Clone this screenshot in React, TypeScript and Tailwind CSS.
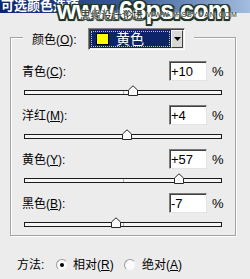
import React from "react";

const font = "font-['Liberation_Sans','Noto_Sans_CJK_SC',sans-serif]";

function Label({ zh, k }: { zh: string; k: string }) {
  return (
    <span className="text-[12px] leading-[14px] text-black">
      {zh}(<span className="underline underline-offset-1">{k}</span>):
    </span>
  );
}

function Row({ zh, k, value, v }: { zh: string; k: string; value: string; v: number }) {
  const left = 50 + v / 2;
  return (
    <div className="flex flex-col">
      <div className="flex h-[20px] items-center pl-[11px]">
        <div className="w-[147px]">
          <Label zh={zh} k={k} />
        </div>
        <div className="flex h-[20px] w-[38px] items-center border border-[#7b7b7b] border-b-[#e4e4e4] border-r-[#e4e4e4] bg-white pl-[1px] text-[13px] leading-none text-black shadow-[inset_1px_1px_0_#404040]">
          {value}
        </div>
        <span className="ml-[5px] text-[13px] leading-none text-black">%</span>
      </div>
      <div className="relative ml-[13px] mt-[9px] h-[5px] w-[198px] border border-[#1c1c1c] bg-[#f6f6f6]">
        <div className="absolute left-1/2 top-0 h-full w-px bg-[#b0b0b0]" />
        <svg
          className="absolute -top-[6px] -ml-[5px]"
          style={{ left: `${left}%` }}
          width="10"
          height="11"
          viewBox="0 0 10 11"
        >
          <path d="M0.5 10.5 L0.5 5 L5 0.8 L9.5 5 L9.5 10.5 Z" fill="#fafafa" stroke="#2a2a2a" strokeWidth="1" />
        </svg>
      </div>
    </div>
  );
}

function Radio({ on }: { on: boolean }) {
  return (
    <div className="flex h-[12px] w-[12px] items-center justify-center rounded-full border border-[#9a9a9a] border-b-[#ececec] border-r-[#ececec] bg-[#fbfbfb]">
      {on && <div className="h-[4px] w-[4px] rounded-full bg-black" />}
    </div>
  );
}

export default function App() {
  return (
    <div className={`relative h-[279px] w-[250px] overflow-hidden bg-[#ececec] ${font}`}>
      {/* title bar */}
      <div className="flex h-[13px] items-start bg-gradient-to-r from-[#0b256b] via-[#3a5a96] to-[#a3bde0] pl-[1px]">
        <span className="-mt-[2px] text-[13px] font-bold leading-[15px] text-white">可选颜色选项</span>
      </div>

      {/* group */}
      <div className="ml-[10px] mt-[24px] w-[226px] border border-[#a3a3a3] pb-[8px] shadow-[1px_1px_0_#fff,inset_1px_1px_0_#fff]">
        <div className="-mt-[11px] ml-[12px] flex w-fit items-center bg-[#ececec] px-[9px]">
          <div className="w-[56px]">
            <Label zh="颜色" k="O" />
          </div>
          <div className="flex h-[22px] w-[97px] items-stretch border border-[#808080] border-b-white border-r-white p-[1px] shadow-[inset_1px_1px_0_#404040]">
            <div className="flex flex-1 items-center bg-[#0e246a] outline-1 -outline-offset-2 outline-dotted outline-[#c8c8a0]">
              <div className="ml-[6px] h-[12px] w-[13px] border border-black bg-[#ffff00]" />
              <span className="ml-[7px] text-[14px] leading-none text-white">黄色</span>
            </div>
            <div className="flex w-[12px] items-center justify-center border border-[#f8f8f8] border-b-[#404040] border-r-[#404040] bg-[#d8d8d8]">
              <svg width="7" height="4" viewBox="0 0 7 4">
                <path d="M0 0 H7 L3.5 4 Z" fill="#000" />
              </svg>
            </div>
          </div>
        </div>
        <div className="mt-[10px] flex flex-col gap-[10px]">
          <Row zh="青色" k="C" value="+10" v={10} />
          <Row zh="洋红" k="M" value="+4" v={4} />
          <Row zh="黄色" k="Y" value="+57" v={57} />
          <Row zh="黑色" k="B" value="-7" v={-7} />
        </div>
      </div>

      {/* method */}
      <div className="ml-[17px] mt-[22px] flex h-[14px] items-center text-[12px] leading-[14px] text-black">
        <span className="w-[39px]">方法:</span>
        <Radio on={true} />
        <span className="ml-[5px] w-[51px]">
          相对(<span className="underline underline-offset-1">R</span>)
        </span>
        <Radio on={false} />
        <span className="ml-[6px]">
          绝对(<span className="underline underline-offset-1">A</span>)
        </span>
      </div>

      {/* watermark overlay */}
      <div className="pointer-events-none absolute left-[57px] -top-[2px] text-[25px] font-bold leading-[25px] tracking-[-0.6px] text-white [text-shadow:1.5px_1.5px_0_#22362a,-1.5px_-1.5px_0_#22362a,1.5px_-1.5px_0_#22362a,-1.5px_1.5px_0_#22362a,0_2px_1px_#22362a,2px_0_1px_#22362a]">
        www.68ps.com
      </div>
      <div className="pointer-events-none absolute left-[80px] top-[9px] flex items-center">
        <span className="text-[10.5px] leading-[12px] text-[#1d2a22] [text-shadow:0_0_2px_#fff,0_0_1px_#fff]">思缘设计论坛</span>
        <span className="ml-[4px] text-[7px] leading-[12px] tracking-[0.9px] text-[#1d2a22] [text-shadow:0_0_2px_#fff,0_0_1px_#fff]">WWW.MISSYUAN.COM</span>
      </div>
    </div>
  );
}
